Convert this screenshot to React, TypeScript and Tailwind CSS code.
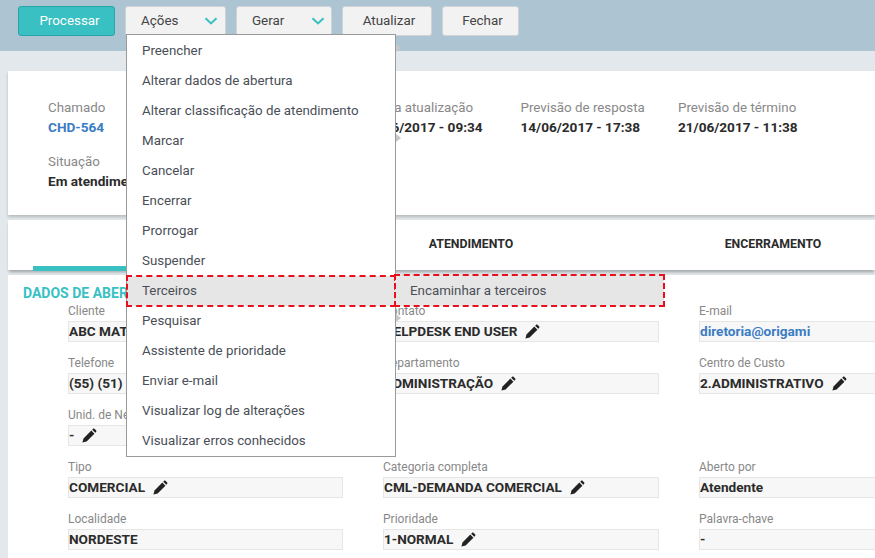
const menuItems = [
  "Preencher",
  "Alterar dados de abertura",
  "Alterar classificação de atendimento",
  "Marcar",
  "Cancelar",
  "Encerrar",
  "Prorrogar",
  "Suspender",
  "Terceiros",
  "Pesquisar",
  "Assistente de prioridade",
  "Enviar e-mail",
  "Visualizar log de alterações",
  "Visualizar erros conhecidos",
];

const withArrow = ["Preencher", "Marcar", "Pesquisar"];

type Field = {
  label: string;
  value: string;
  edit?: boolean;
  link?: boolean;
};

const rows: Field[][] = [
  [
    { label: "Cliente", value: "ABC MATRIZ" },
    { label: "Contato", value: "HELPDESK END USER", edit: true },
    { label: "E-mail", value: "diretoria@origami", link: true },
  ],
  [
    { label: "Telefone", value: "(55) (51) 3333-0000" },
    { label: "Departamento", value: "ADMINISTRAÇÃO", edit: true },
    { label: "Centro de Custo", value: "2.ADMINISTRATIVO", edit: true },
  ],
  [{ label: "Unid. de Negócio", value: "-", edit: true }],
  [
    { label: "Tipo", value: "COMERCIAL", edit: true },
    { label: "Categoria completa", value: "CML-DEMANDA COMERCIAL", edit: true },
    { label: "Aberto por", value: "Atendente" },
  ],
  [
    { label: "Localidade", value: "NORDESTE" },
    { label: "Prioridade", value: "1-NORMAL", edit: true },
    { label: "Palavra-chave", value: "-" },
  ],
];

function Chevron() {
  return (
    <svg width="14" height="8" viewBox="0 0 14 8" fill="none" className="ml-auto">
      <path d="M1.5 1.2 7 6.4l5.5-5.2" stroke="#38c0c2" strokeWidth="2.1" />
    </svg>
  );
}

function Pencil() {
  return (
    <svg width="15" height="15" viewBox="0 0 14 14" fill="#222" className="ml-[8px] shrink-0">
      <path d="M.4 13.6l1-3.9 7.3-7.3 2.9 2.9-7.3 7.3z" />
      <path d="M9.5 1.6l.7-.7c.5-.5 1.1-.5 1.6 0l1.3 1.3c.5.5.5 1.1 0 1.6l-.7.7z" />
    </svg>
  );
}

function ToolButton({ label, chevron, className }: { label: string; chevron?: boolean; className: string }) {
  return (
    <button className={`flex h-[30px] items-center rounded-[3px] border border-[#cfd3d6] bg-[#f2f2f2] text-[13.4px] text-[#444] ${className}`}>
      <span>{label}</span>
      {chevron && <Chevron />}
    </button>
  );
}

function Info({ label, value, link }: { label: string; value: string; link?: boolean }) {
  return (
    <div>
      <div className="h-4 whitespace-nowrap text-[13.33px] leading-4 text-[#888]">{label}</div>
      <div className={`mt-[3px] h-4 whitespace-nowrap text-[13.6px] font-bold leading-4 ${link ? "text-[#3a7cc4]" : "text-[#2b2b2b]"}`}>
        {value}
      </div>
    </div>
  );
}

function FieldBox({ field }: { field: Field }) {
  return (
    <div className="min-w-0">
      <div className="h-4 whitespace-nowrap text-[12px] leading-4 text-[#888]">{field.label}</div>
      <div className="mt-[2px] flex h-[21px] items-center whitespace-nowrap border border-[#e6e6e6] bg-[#f7f7f7] text-[13.6px] font-bold text-[#2b2b2b]">
        <span className={field.link ? "text-[#3a7cc4]" : ""}>{field.value}</span>
        {field.edit && <Pencil />}
      </div>
    </div>
  );
}

export default function App() {
  return (
    <div className="h-[558px] w-[875px] overflow-hidden bg-[#e2e8eb] font-['Roboto',sans-serif]">
      <div className="flex h-[51px] items-start gap-[10px] bg-[#adc4d2] pl-[18px] pt-[6px]">
        <button className="h-[30px] w-[97px] rounded-[3px] border border-[#2aa5a7] bg-[#38c0c2] pl-[6px] text-[13.4px] text-white">
          Processar
        </button>
        <div className="relative">
          <ToolButton label="Ações" chevron className="w-[101px] pl-[15px] pr-[7px]" />
          <div className="absolute left-[1px] top-[28px] z-10 w-[270px] border border-[#9a9a9a] bg-white pt-[1px]">
            {menuItems.map((item) => (
              <div
                key={item}
                className={`relative flex h-[30px] items-center whitespace-nowrap pl-[15px] text-[13.33px] text-[#4a4f57] ${
                  item === "Terceiros" ? "bg-[#e6e6e6] outline-2 -outline-offset-1 outline-dashed outline-[#e8101c]" : ""
                }`}
              >
                {item}
                {withArrow.includes(item) && (
                  <span className="absolute left-[269px] top-2 border-y-4 border-l-[5px] border-y-transparent border-l-[#c8c8c8]" />
                )}
                {item === "Terceiros" && (
                  <div className="absolute left-full top-[-1px] flex h-[31px] w-[269px] items-center bg-[#e6e6e6] pl-[15px] text-[#4a4f57] outline-2 -outline-offset-1 outline-dashed outline-[#e8101c]">
                    Encaminhar a terceiros
                  </div>
                )}
              </div>
            ))}
          </div>
        </div>
        <ToolButton label="Gerar" chevron className="w-[96px] pl-[15px] pr-[6px]" />
        <ToolButton label="Atualizar" className="w-[90px] justify-center pl-1" />
        <ToolButton label="Fechar" className="w-[77px] justify-center pl-1" />
      </div>

      <div className="ml-2 mt-5 h-[144px] bg-white pl-10 pt-[29px] shadow-[0_2px_3px_rgba(0,0,0,0.2)]">
        <div className="grid grid-cols-[157.5px_157.5px_157.5px_157.5px_157.5px] gap-y-[19px]">
          <Info label="Chamado" value="CHD-564" link />
          <div />
          <Info label="Última atualização" value="14/06/2017 - 09:34" />
          <Info label="Previsão de resposta" value="14/06/2017 - 17:38" />
          <Info label="Previsão de término" value="21/06/2017 - 11:38" />
          <Info label="Situação" value="Em atendimento" />
        </div>
      </div>

      <div className="ml-2 mt-[5px] flex h-[50px] items-start bg-white pl-[25px] shadow-[0_3px_3px_-1px_rgba(0,0,0,0.3)]">
        <div className="h-[51px] w-[287px] shrink-0 border-b-[5px] border-[#38c0c2]" />
        <div className="flex h-[48px] w-[302px] shrink-0 items-center justify-center text-[12.3px] font-bold text-[#2b2b2b]">ATENDIMENTO</div>
        <div className="flex h-[48px] w-[302px] shrink-0 items-center justify-center text-[12.3px] font-bold text-[#2b2b2b]">ENCERRAMENTO</div>
      </div>

      <div className="ml-2 mt-[5px] h-[283px] bg-white pl-[15px] pt-[10px]">
        <h2 className="h-4 text-[14px] font-bold leading-4 text-[#38c0c2]">DADOS DE ABERTURA</h2>
        <div className="ml-[45px] mt-[2px] grid w-[860px] grid-cols-[275px_276px_275px] gap-x-10 gap-y-[13px]">
          {rows.map((row) =>
            row.map((field, i) => (
              <div key={field.label} className={row.length === 1 ? "col-span-3 w-[275px]" : i === 2 ? "w-[300px]" : ""}>
                <FieldBox field={field} />
              </div>
            )),
          )}
        </div>
      </div>
    </div>
  );
}
